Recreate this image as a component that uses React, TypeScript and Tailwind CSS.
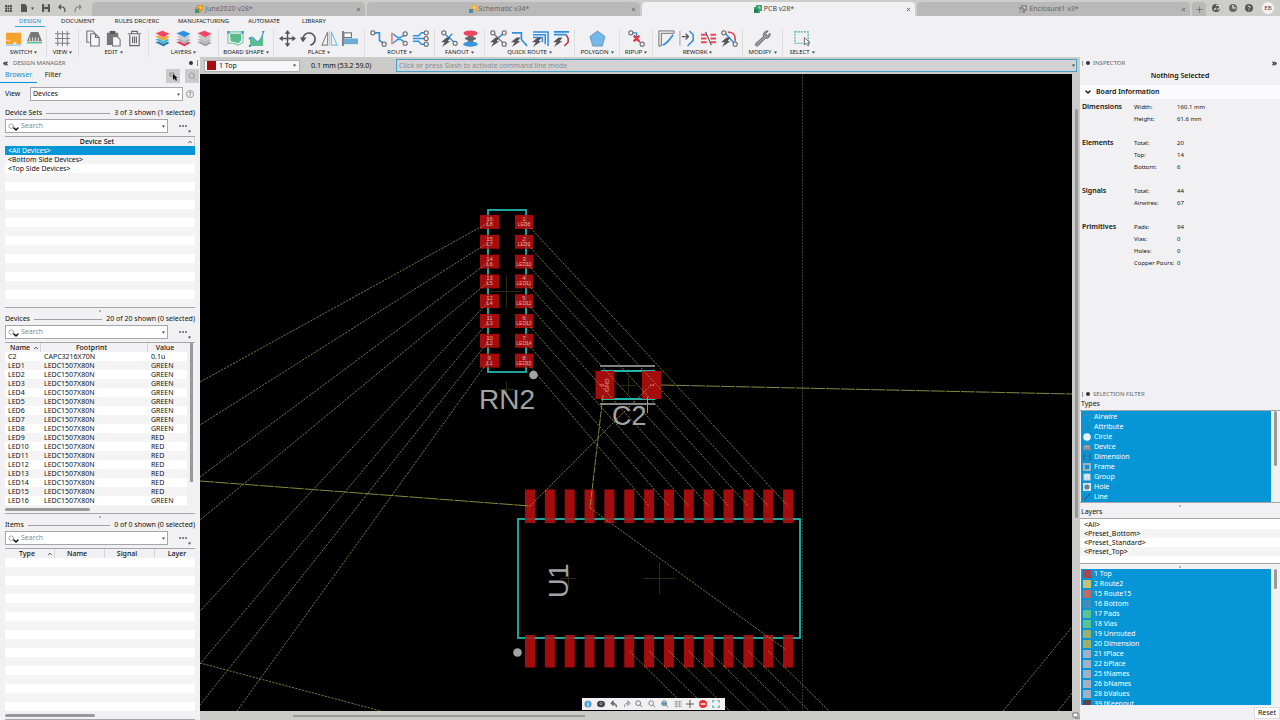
import React from 'react';
import { ChevronDown, ChevronUp, ChevronsLeft, ChevronsRight, Plus, Search } from 'lucide-react';

type IconProps = { className?: string };

const Svg: React.FC<{ children: React.ReactNode; className?: string; box?: string }> = ({
  children,
  className = 'w-[17px] h-[17px]',
  box = '0 0 18 18',
}) => (
  <svg viewBox={box} className={className} fill="none" stroke="#555" strokeWidth="1.2">
    {children}
  </svg>
);

const BoltMark = () => <path d="M6 8 L0 13 L4 13 L1 18 L10 12 L7 12 L10 8 Z" fill="#555" stroke="none" />;
const Ring: React.FC<{ x: number; y: number }> = ({ x, y }) => (
  <circle cx={x} cy={y} r="2.2" fill="#f1f1f3" stroke="#666" strokeWidth="1.1" />
);

const Stack: React.FC<{ a: string; b: string; c: string; d: string }> = ({ a, b, c, d }) => (
  <Svg>
    <g stroke="#f1f1f3" strokeWidth="0.5">
      <path d="M1 13 L9 10 L17 13.5 L10 17.5 Z" fill={d} />
      <path d="M1 10 L9 7 L17 10.5 L10 14.5 Z" fill={c} />
      <path d="M1 7 L9 4 L17 7.5 L10 11.5 Z" fill={b} />
      <path d="M1 3.5 L9 0.5 L17 4 L10 8 Z" fill={a} />
    </g>
  </Svg>
);

const icons: Record<string, React.ReactNode> = {
  board: (
    <Svg>
      <path d="M1 3 H17 V15 H12 V13 H9 V15 H1 Z" fill="#f5a12c" stroke="none" />
      <path d="M1 11 H5 V13" stroke="#ffe0b0" strokeWidth="0.9" />
      <path d="M1 16 H17" stroke="#6cc3ea" strokeWidth="1" />
    </Svg>
  ),
  chip: (
    <Svg>
      <path d="M5 2 H13 L17 12 H1 Z" fill="#777" stroke="none" />
      <path d="M4 8 V12 M7 8 V12 M10 8 V12 M13 8 V12" stroke="#ddd" />
      <path d="M1 13.5 H17" stroke="#5fc58f" strokeWidth="1.6" />
    </Svg>
  ),
  grid: (
    <Svg>
      <path d="M1 4 H17 M1 9 H17 M1 14 H17 M4 1 V17 M9 1 V17 M14 1 V17" stroke="#777" strokeWidth="1" />
    </Svg>
  ),
  copy: (
    <Svg>
      <path d="M6 13 H3 V1 H9 L12 4" stroke="#777" />
      <path d="M7 4 H12 L16 8 V17 H7 Z M12 4 V8 H16" stroke="#777" fill="#f7f7f8" />
    </Svg>
  ),
  paste: (
    <Svg>
      <path d="M2 3 H14 V8 H8 V16 H2 Z" fill="#777" stroke="none" />
      <path d="M5 1 H11 V4 H5 Z" fill="#555" stroke="none" />
      <path d="M8 7 H13 L16 10 V17 H8 Z" fill="#f7f7f8" stroke="#777" />
    </Svg>
  ),
  trash: (
    <Svg>
      <path d="M2 4 H16 M6 4 V1.500 H12 V4 M4 5 V16.500 H14 V5 M7 7 V14 M9 7 V14 M11 7 V14" stroke="#666" />
    </Svg>
  ),
  layersAll: <Stack a="#ee4560" b="#f7a32b" c="#35b8dc" d="#2670ad" />,
  layersBlue: <Stack a="#2f8fe0" b="#c9c9cb" c="#aaaaac" d="#dd3350" />,
  layersRed: <Stack a="#ee4560" b="#c4c4c6" c="#b4b4b6" d="#9c9c9e" />,
  shape: (
    <Svg>
      <path d="M3 4 H15 V11 L12 14 L4 12 Z" fill="#59bd8e" stroke="none" />
      <path d="M1 2 H17 V13 L12 16 L6 14 H1 Z" stroke="#79c7a5" />
      <path d="M0 1 h3 v3 h-3 z M15 1 h3 v3 h-3 z" fill="#4aa4dd" stroke="none" />
    </Svg>
  ),
  outline: (
    <Svg>
      <path d="M2 17 V9 Q5 6 8 11 Q12 15 16 3 V17 Z" fill="#59bd8e" stroke="none" />
      <path d="M1 9 Q5 5 8 11 Q12 16 17 1" stroke="#3c8fcc" strokeWidth="1" />
      <path d="M1 8 h2 v2 h-2 z M15 1 h2 v2 h-2 z M1 16 h2 v2 h-2 z" fill="#3c8fcc" stroke="none" />
    </Svg>
  ),
  move: (
    <Svg>
      <path d="M9 3 V15 M3 9 H15" strokeWidth="1.5" />
      <path d="M9 0 L12 4 H6 Z M9 18 L12 14 H6 Z M0 9 L4 6 V12 Z M18 9 L14 6 V12 Z" fill="#555" stroke="none" />
    </Svg>
  ),
  rotate: (
    <Svg>
      <path d="M3 10 A6.500 6.500 0 1 1 11 16" strokeWidth="1.7" />
      <path d="M0 8 H7 L3 13 Z" fill="#555" stroke="none" />
    </Svg>
  ),
  mirror: (
    <Svg>
      <path d="M7 2 V16 H1 Z" stroke="#888" />
      <path d="M11 2 V16 H17 Z" stroke="#79bfe4" />
      <path d="M9 1 V17" stroke="#bbb" strokeWidth="0.8" />
    </Svg>
  ),
  align: (
    <Svg>
      <path d="M1 1 V17" strokeWidth="1.5" />
      <rect x="2" y="3" width="8" height="5" fill="#fafafa" stroke="#777" />
      <rect x="2" y="9" width="15" height="6" fill="#6cabd8" stroke="none" />
    </Svg>
  ),
  route: (
    <Svg>
      <path d="M4 3 H10 V11 L14 14" stroke="#2f8fe0" strokeWidth="1.7" />
      <Ring x={3} y={3} />
      <Ring x={15} y={15} />
    </Svg>
  ),
  routeDiff: (
    <Svg>
      <path d="M2 4 L7 8 H10 L15 5 M2 14 L7 10 H10 L15 13" stroke="#2f8fe0" strokeWidth="1.6" />
      <path d="M1 3 V15" stroke="#e0455a" />
      <Ring x={15} y={4} />
      <Ring x={15} y={14} />
    </Svg>
  ),
  routeMulti: (
    <Svg>
      <path d="M1 6 H7 L10 3 H14 M1 9 H14 M1 12 H7 L10 15 H14" stroke="#2f8fe0" strokeWidth="1.6" />
      <Ring x={15} y={3} />
      <Ring x={15} y={9} />
      <Ring x={15} y={15} />
    </Svg>
  ),
  fanout: (
    <Svg>
      <path d="M5 5 L14 13 M6 10 L12 4" stroke="#2f8fe0" strokeWidth="1.5" />
      <BoltMark />
      <Ring x={3} y={3} />
      <Ring x={15} y={14} />
    </Svg>
  ),
  via: (
    <Svg>
      <path d="M6 3 H12 V15 H6 Z" fill="#777" stroke="none" />
      <ellipse cx="9" cy="3.500" rx="7.500" ry="3" fill="#ee4560" stroke="none" />
      <ellipse cx="9" cy="9" rx="6" ry="2" fill="#666" stroke="none" />
      <ellipse cx="9" cy="15" rx="7.500" ry="2.800" fill="#3a96dc" stroke="none" />
    </Svg>
  ),
  quickAll: (
    <Svg>
      <path d="M3 3 L9 9 M9 9 L15 15" stroke="#666" />
      <path d="M8 9 L15 3" stroke="#2f8fe0" strokeWidth="1.6" />
      <BoltMark />
      <Ring x={3} y={3} />
      <Ring x={15} y={3} />
      <Ring x={15} y={15} />
    </Svg>
  ),
  quickOne: (
    <Svg>
      <path d="M1 3 H11 V10 L17 17" stroke="#2f8fe0" strokeWidth="1.8" />
      <BoltMark />
    </Svg>
  ),
  quickMany: (
    <Svg>
      <path d="M1 2 H17 V17 M1 5 H14 V15 M1 8 H11 V13" stroke="#2f8fe0" strokeWidth="1.6" />
      <BoltMark />
    </Svg>
  ),
  quickRed: (
    <Svg>
      <path d="M1 2 H17 M1 5 H14" stroke="#2f8fe0" strokeWidth="1.8" />
      <path d="M14 5 L16 9 V13 L12 17" stroke="#b2313c" strokeWidth="1.6" />
      <BoltMark />
    </Svg>
  ),
  polygon: (
    <Svg>
      <path d="M9 1 L17 7 L14 17 H4 L1 7 Z" fill="#74b9ea" stroke="#5a87a8" strokeWidth="0.8" />
    </Svg>
  ),
  ripup: (
    <Svg>
      <path d="M4 3 H9 V10 L14 14" stroke="#2f8fe0" strokeWidth="1.4" />
      <path d="M6 6 L12 12 M12 6 L6 12" stroke="#e23a45" strokeWidth="2.4" />
      <Ring x={3} y={3} />
      <Ring x={15} y={15} />
    </Svg>
  ),
  miter: (
    <Svg>
      <path d="M1 17 V1 H17 V3.500 H3.500 V17 Z" fill="#f7f7f8" stroke="#666" strokeWidth="1" />
      <path d="M5 16 Q9 15 16 5" stroke="#2f8fe0" strokeWidth="1.800" />
    </Svg>
  ),
  slide: (
    <Svg>
      <path d="M1 1 V17" stroke="#aaa" />
      <path d="M3 7 H10 M7 4 L10 7 L7 10" strokeWidth="1.400" />
      <path d="M11 1 L15 5 V11 L9 17" stroke="#2f8fe0" strokeWidth="1.600" />
    </Svg>
  ),
  split: (
    <Svg>
      <path d="M1 5 H7 M11 5 H17 M1 9 H7 M11 9 H17 M1 13 H7 M11 13 H17" stroke="#ee4560" strokeWidth="2" />
      <path d="M6 2 L12 16" stroke="#555" />
    </Svg>
  ),
  reroute: (
    <Svg>
      <path d="M4 3 L14 14" stroke="#2f8fe0" strokeWidth="1.600" />
      <path d="M7 2 Q16 2 15 12" stroke="#e0455a" strokeWidth="1.600" />
      <BoltMark />
      <Ring x={3} y={3} />
      <Ring x={15} y={15} />
    </Svg>
  ),
  wrench: (
    <Svg>
      <path
        d="M10 7 A4.500 4.500 0 0 1 15 1 L12.500 4 L14.500 6 L17 3.500 A4.500 4.500 0 0 1 12 9 L4 17 Q0 17 2 14 Z"
        fill="#999"
        stroke="#666"
        strokeWidth="0.9"
      />
    </Svg>
  ),
  select: (
    <Svg>
      <rect x="1" y="2" width="14" height="12" stroke="#3fae84" strokeDasharray="2 1.2" />
      <path d="M11 8 V16 L13 14 L15 17 L16 16 L14.5 13.5 H17 Z" fill="#fff" stroke="#444" strokeWidth="0.8" />
    </Svg>
  ),
};

const toolGroups = [
  { label: 'SWITCH', width: 'w-[46px]', icons: ['board', 'chip'] },
  { label: 'VIEW', width: 'w-8', icons: ['grid'] },
  { label: 'EDIT', width: 'w-[70px]', icons: ['copy', 'paste', 'trash'] },
  { label: 'LAYERS', width: 'w-[70px]', icons: ['layersAll', 'layersBlue', 'layersRed'] },
  { label: 'BOARD SHAPE', width: 'w-[55px]', icons: ['shape', 'outline'] },
  { label: 'PLACE', width: 'w-[91px]', icons: ['move', 'rotate', 'mirror', 'align'] },
  { label: 'ROUTE', width: 'w-[70px]', icons: ['route', 'routeDiff', 'routeMulti'] },
  { label: 'FANOUT', width: 'w-[50px]', icons: ['fanout', 'via'] },
  { label: 'QUICK ROUTE', width: 'w-[90px]', icons: ['quickAll', 'quickOne', 'quickMany', 'quickRed'] },
  { label: 'POLYGON', width: 'w-[45px]', icons: ['polygon'] },
  { label: 'RIPUP', width: 'w-[33px]', icons: ['ripup'] },
  { label: 'REWORK', width: 'w-[90px]', icons: ['miter', 'slide', 'split', 'reroute'] },
  { label: 'MODIFY', width: 'w-10', icons: ['wrench'] },
  { label: 'SELECT', width: 'w-[38px]', icons: ['select'] },
];

const menuTabs = [
  { label: 'DESIGN', width: 'w-[30px]', active: true },
  { label: 'DOCUMENT', width: 'w-[42px]' },
  { label: 'RULES DRC/ERC', width: 'w-[52px]' },
  { label: 'MANUFACTURING', width: 'w-[57px]' },
  { label: 'AUTOMATE', width: 'w-10' },
  { label: 'LIBRARY', width: 'w-9' },
];

const docTabs = [
  { label: 'June2020 v28*', color: '#e0962e', accent: '#3e9a72' },
  { label: 'Schematic v34*', color: '#e8b04a', accent: '#3c8fb8' },
  { label: 'PCB v28*', color: '#3aa372', accent: '#2b7d57', active: true },
  { label: 'Enclosure1 v3*', color: '#8a8a8a', accent: '#a8a8a8' },
];

const CloseMark = () => (
  <Svg box="0 0 6 6" className="w-[5px] h-[5px]">
    <path d="M1 1 L5 5 M5 1 L1 5" stroke="#555" strokeWidth="1" />
  </Svg>
);

const Caret: React.FC<IconProps> = ({ className = '' }) => (
  <svg viewBox="0 0 4 3" className={`w-[3px] h-[3px] ${className}`}>
    <path d="M0 0 H4 L2 3 Z" fill="#444" />
  </svg>
);

const TitleBar = () => (
  <header className="flex h-4 shrink-0 items-end bg-[#cdcdcb] text-[7px] text-[#666]">
    <div className="flex h-4 w-[92px] items-center gap-2 pl-1">
      <button aria-label="Data panel">
        <Svg box="0 0 8 8" className="w-2 h-2">
          <path d="M1 1h2v2H1zM3.500 1h2v2h-2zM6 1h2v2H6zM1 3.500h2v2H1zM3.500 3.500h2v2h-2zM6 3.500h2v2H6zM1 6h2v2H1zM3.500 6h2v2h-2zM6 6h2v2H6z" fill="#555" stroke="none" />
        </Svg>
      </button>
      <button aria-label="File" className="flex items-center gap-[3px]">
        <Svg box="0 0 8 8" className="w-2 h-2">
          <path d="M1 0 H5 L7 2 V8 H1 Z" fill="#555" stroke="none" />
        </Svg>
        <Caret />
      </button>
      <button aria-label="Save">
        <Svg box="0 0 8 8" className="w-2 h-2">
          <path d="M0 0 H7 L8 1 V8 H0 Z" fill="#555" stroke="none" />
          <path d="M2 0 H6 V3 H2 Z M2 5 H6 V8 H2 Z" fill="#bbb" stroke="none" />
        </Svg>
      </button>
      <button aria-label="Undo">
        <Svg box="0 0 8 8" className="w-2 h-2">
          <path d="M2 3 H5 Q7 4 7 8" stroke="#555" />
          <path d="M0 3 L3 0 V6 Z" fill="#555" stroke="none" />
        </Svg>
      </button>
      <button aria-label="Redo">
        <Svg box="0 0 8 8" className="w-2 h-2">
          <path d="M6 3 H3 Q1 4 1 8" stroke="#888" />
          <path d="M8 3 L5 0 V6 Z" fill="#888" stroke="none" />
        </Svg>
      </button>
    </div>
    <nav className="flex h-[14px] min-w-0 flex-1 gap-[2px]">
      {docTabs.map((tab) => (
        <div
          key={tab.label}
          className={`flex min-w-0 flex-1 items-center rounded-t-sm pr-1 ${
            tab.active ? 'bg-[#f1f1f3] text-[#444]' : 'bg-[#b9b9ba]'
          }`}
        >
          <button className="flex flex-1 items-center justify-center gap-[2px]">
            <Svg box="0 0 8 8" className="w-2 h-2">
              <path d="M2 0 H8 V6 H6 V8 H0 V2 H2 Z" fill={tab.color} stroke="none" />
              <path d="M0 4 H4 V8 H0 Z" fill={tab.accent} stroke="none" />
              <path d="M4 2 H6 V4" stroke="#eee" strokeWidth="0.8" />
            </Svg>
            {tab.label}
          </button>
          <button aria-label={`Close ${tab.label}`}>
            <CloseMark />
          </button>
        </div>
      ))}
      <button aria-label="New tab" className="flex w-[14px] items-center justify-center rounded-t-sm bg-[#b9b9ba]">
        <Plus size={9} />
      </button>
    </nav>
    <div className="flex h-4 w-[74px] items-center justify-between pl-[6px] pr-[6px]">
      <button aria-label="Extensions">
        <Svg box="0 0 8 8" className="w-2 h-2">
          <circle cx="4" cy="4" r="4" fill="#555" stroke="none" />
          <path d="M2 6 L4 4 M4 2 A2 2 0 1 1 5 5" stroke="#ddd" />
        </Svg>
      </button>
      <button aria-label="Job status">
        <Svg box="0 0 8 8" className="w-2 h-2">
          <circle cx="4" cy="4" r="4" fill="#666" stroke="none" />
          <path d="M4 1 V4 H7" stroke="#eee" />
        </Svg>
      </button>
      <button aria-label="Help">
        <Svg box="0 0 8 8" className="w-2 h-2">
          <circle cx="4" cy="4" r="4" fill="#555" stroke="none" />
          <path d="M3 3 Q3 2 4 2 Q5.500 2 5 3.500 L4 4.500 M4 5.500 V6.500" stroke="#eee" strokeWidth="0.9" />
        </Svg>
      </button>
      <button className="flex h-3 w-3 items-center justify-center rounded-full bg-[#f3f3f3] text-[6px] text-[#444]">
        EB
      </button>
    </div>
  </header>
);

const Toolbar = () => (
  <div className="h-[41px] shrink-0 overflow-hidden bg-[#f1f1f3] text-[#222]">
    <nav className="flex h-[11px] gap-3 pl-[15px]">
      {menuTabs.map((tab) => (
        <button
          key={tab.label}
          className={`flex h-[11px] shrink-0 items-center justify-center whitespace-nowrap border-b text-[6px] ${tab.width} ${
            tab.active ? 'border-[#3fa3cf] text-[#1593cf]' : 'border-transparent'
          }`}
        >
          {tab.label}
        </button>
      ))}
    </nav>
    <div className="flex pl-px pt-[2px]">
      {toolGroups.map((group, i) => (
        <div
          key={group.label}
          className={`flex h-7 shrink-0 flex-col items-center border-[#dedee0] ${
            i < toolGroups.length - 1 ? 'border-r' : ''
          } ${group.width}`}
        >
          <div className="flex h-[18px]">
            {group.icons.map((name) => (
              <button key={name} aria-label={name} className="flex w-[21px] items-center justify-center">
                {icons[name]}
              </button>
            ))}
          </div>
          <button className="flex h-[10px] items-center gap-[2px] whitespace-nowrap text-[6px]">
            {group.label}
            <Caret />
          </button>
        </div>
      ))}
    </div>
  </div>
);

const SectionTitle: React.FC<{ title: string; note: string }> = ({ title, note }) => (
  <div className="flex h-3 shrink-0 items-center gap-1">
    <h2>{title}</h2>
    <span className="h-px flex-1 bg-[#a0a0a2]" />
    <span>{note}</span>
  </div>
);

const SearchRow: React.FC<{ id: string }> = ({ id }) => (
  <div className="flex h-[14px] shrink-0 items-center gap-[10px]">
    <label
      htmlFor={id}
      className="flex h-[14px] w-[163px] items-center border border-[#a6a6a8] bg-white pl-[2px] pr-[2px]"
    >
      <Search size={7} className="text-[#777]" />
      <ChevronDown size={8} strokeWidth={4} className="-ml-[3px] mt-[6px] shrink-0 text-black" />
      <input
        id={id}
        placeholder="Search"
        className="min-w-0 flex-1 bg-transparent pl-[1px] text-[7px] outline-none placeholder:text-[#8a8a8a]"
      />
      <Caret />
    </label>
    <button aria-label="More options" className="flex h-[14px] w-[13px] flex-col items-end justify-end">
      <Svg box="0 0 8 2" className="w-2 h-[2px] mr-1">
        <path d="M0 0h2v2H0zM3 0h2v2H3zM6 0h2v2H6z" fill="#888" stroke="none" />
      </Svg>
      <Caret className="mt-[3px]" />
    </button>
  </div>
);

const Handle = () => (
  <div className="flex h-[5px] shrink-0 items-center justify-center">
    <span className="h-[2px] w-[2px] bg-[#b5b5b7]" />
  </div>
);

interface Column {
  label: string;
  width: string;
  sorted?: boolean;
}

interface GridTableProps {
  columns: Column[];
  rows: string[][];
  selected?: number;
}

// Pads the data with blank striped rows so the grid always fills its panel
const GridTable: React.FC<GridTableProps> = ({ columns, rows, selected }) => {
  const blanks = Math.max(0, 18 - rows.length);
  const allRows = [...rows, ...Array.from({ length: blanks }, () => columns.map(() => ''))];
  return (
    <table className="w-full table-fixed border-collapse leading-[9px]">
      <thead>
        <tr className="h-[9px] bg-[#f1f1f3] leading-[8px]">
          {columns.map((col) => (
            <th
              key={col.label}
              className={`relative h-[9px] py-0 pl-0 pr-[6px] font-medium shadow-[inset_-1px_0_0_#d4d4d6] ${col.width}`}
            >
              {col.label}
              {col.sorted && <ChevronUp size={6} strokeWidth={3} className="absolute right-[2px] top-[2px]" />}
            </th>
          ))}
        </tr>
      </thead>
      <tbody>
        {allRows.map((row, i) => (
          <tr
            key={i}
            className={`h-[9px] ${i === selected ? 'bg-[#0696d7] text-white' : i % 2 ? 'bg-[#f4f4f4]' : 'bg-white'}`}
          >
            {row.map((cell, j) => (
              <td key={j} className="h-[9px] whitespace-nowrap py-0 pl-[3px] pr-0">
                {cell}
              </td>
            ))}
          </tr>
        ))}
      </tbody>
    </table>
  );
};

const devices = [
  ['C2', 'CAPC3216X70N', '0.1u'],
  ...Array.from({ length: 16 }, (_, i) => [`LED${i + 1}`, 'LEDC1507X80N', i < 8 || i === 15 ? 'GREEN' : 'RED']),
];

const DesignManager = () => (
  <aside className="flex w-[200px] shrink-0 flex-col overflow-hidden bg-[#f1f1f3]">
    <div className="flex h-3 shrink-0 items-center gap-1 pl-[2px] pr-[2px] text-[6px] text-[#666]">
      <ChevronsLeft size={7} strokeWidth={4} className="text-[#333]" />
      <span className="flex-1">DESIGN MANAGER</span>
      <span className="h-1 w-1 rounded-full bg-[#333]" />
      <span className="h-[6px] w-px bg-[#888]" />
    </div>
    <div className="flex h-[14px] shrink-0 items-center">
      <button className="h-[14px] w-[37px] border-b border-[#0696d7] pb-[2px] text-[#0a8fd0]">Browser</button>
      <button className="h-[14px] w-8 pb-[2px]">Filter</button>
      <div className="flex flex-1 justify-end gap-[5px] pr-px">
        <button aria-label="Pick in canvas" className="flex h-[14px] w-[14px] items-center justify-center bg-[#cbcbcc]">
          <Svg box="0 0 9 9" className="w-[9px] h-[9px]">
            <path d="M1 1 H5 V4 H1 Z" stroke="#777" strokeWidth="0.8" />
            <path d="M4 2 V8 L5.500 6.500 L7 9 L8 8 L7 6 H8.500 Z" fill="#111" stroke="none" />
          </Svg>
        </button>
        <button aria-label="Zoom to selection" className="flex h-[14px] w-[14px] items-center justify-center bg-[#cbcbcc]">
          <Search size={8} className="text-[#888]" />
        </button>
      </div>
    </div>
    <div className="flex h-6 shrink-0 items-center pb-[2px] pl-[5px] pr-[6px]">
      <label htmlFor="view" className="w-[25px]">
        View
      </label>
      <div className="flex h-[14px] flex-1 items-center border border-[#a6a6a8] bg-white pr-[2px]">
        <select id="view" className="min-w-0 flex-1 appearance-none bg-transparent pl-[2px] outline-none">
          <option>Devices</option>
        </select>
        <Caret />
      </div>
      <button aria-label="Help" className="ml-[3px] flex h-2 w-2 items-center justify-center rounded-full border border-[#999] text-[5px]">
        ?
      </button>
    </div>

    <div className="flex min-h-0 flex-1 flex-col pl-[5px] pr-[5px]">
      <section className="flex min-h-0 flex-1 flex-col">
        <SectionTitle title="Device Sets" note="3 of 3 shown (1 selected)" />
        <SearchRow id="search-sets" />
        <div className="mt-[3px] min-h-0 flex-1 overflow-hidden border-y border-[#a6a6a8] bg-white">
          <GridTable
            columns={[{ label: 'Device Set', width: 'w-full', sorted: true }]}
            rows={[['<All Devices>'], ['<Bottom Side Devices>'], ['<Top Side Devices>']]}
            selected={0}
          />
        </div>
      </section>
      <Handle />
      <section className="flex min-h-0 flex-1 flex-col">
        <SectionTitle title="Devices" note="20 of 20 shown (0 selected)" />
        <SearchRow id="search-devices" />
        <div className="mt-[3px] flex min-h-0 flex-1 flex-col overflow-hidden border-y border-[#a6a6a8]">
          <div className="flex min-h-0 flex-1">
            <div className="min-h-0 flex-1 overflow-hidden bg-white">
              <GridTable
                columns={[
                  { label: 'Name', width: 'w-9', sorted: true },
                  { label: 'Footprint', width: 'w-[107px]' },
                  { label: 'Value', width: 'w-10' },
                ]}
                rows={devices}
              />
            </div>
            <div className="flex w-2 justify-center">
              <span className="h-[86%] w-[3px] bg-[#999]" />
            </div>
          </div>
          <div className="flex h-2 shrink-0 items-center">
            <span className="h-[3px] w-[85px] rounded-full bg-[#999]" />
          </div>
        </div>
      </section>
      <Handle />
      <section className="flex min-h-0 flex-1 flex-col">
        <SectionTitle title="Items" note="0 of 0 shown (0 selected)" />
        <SearchRow id="search-items" />
        <div className="mt-[3px] flex min-h-0 flex-1 flex-col overflow-hidden border-y border-[#a6a6a8]">
          <div className="min-h-0 flex-1 overflow-hidden bg-white">
            <GridTable
              columns={[
                { label: 'Type', width: 'w-[50px]', sorted: true },
                { label: 'Name', width: 'w-[50px]' },
                { label: 'Signal', width: 'w-[50px]' },
                { label: 'Layer', width: 'w-[50px]' },
              ]}
              rows={[]}
            />
          </div>
          <div className="flex h-2 shrink-0 items-center">
            <span className="h-[3px] w-[90px] rounded-full bg-[#999]" />
          </div>
        </div>
      </section>
    </div>
  </aside>
);

const Cross: React.FC<{ x: number; y: number; r: number }> = ({ x, y, r }) => (
  <path d={`M${x - r} ${y} H${x + r} M${x} ${y - r} V${y + r}`} stroke="#2b2b12" strokeWidth="1" />
);

const resistorRows = Array.from({ length: 8 }, (_, i) => 215 + i * 19.8);
const icPins = Array.from({ length: 14 }, (_, i) => 525 + i * 19.85);
const leftEnds = [
  [200, 382],
  [200, 425],
  [200, 477],
  [200, 520],
  [200, 611],
  [200, 664],
  [200, 705],
  [237, 711],
];

const BoardCanvas = () => (
  <svg viewBox="200 74 872 637" preserveAspectRatio="xMinYMin slice" className="h-full w-full bg-black" fontFamily="Liberation Sans, sans-serif">
    <path d="M802.500 74 V711" stroke="#35352c" strokeDasharray="2 1" />

    <g fill="none" stroke="#22b5ab" strokeWidth="1.8">
      <rect x="488" y="210" width="38" height="162" />
      <path d="M601 371 H655 M601 399 H655" />
      <rect x="518" y="519" width="282" height="119" />
    </g>
    <path d="M600 366 H655 M600 404 H655" stroke="#b0b0b0" strokeWidth="1.6" />

    <g fill="#a50c0e">
      {resistorRows.map((y) => (
        <React.Fragment key={y}>
          <rect x="480" y={y} width="19" height="14" />
          <rect x="515" y={y} width="18" height="14" />
        </React.Fragment>
      ))}
      <rect x="595.500" y="371" width="19" height="28" />
      <rect x="642" y="371" width="19" height="28" />
      {icPins.map((x) => (
        <React.Fragment key={x}>
          <rect x={x} y="489.500" width="10" height="33.500" />
          <rect x={x} y="635" width="10" height="32.500" />
        </React.Fragment>
      ))}
    </g>
    <g stroke="#22b5ab" strokeWidth="1.800" opacity="0.2">
      <path d="M488 215 V368 M526 215 V368 M525 519 H793 M525 638 H793" />
    </g>

    <g stroke="#96964a" strokeWidth="0.9" strokeDasharray="2.2 1.2" opacity="0.9">
      {leftEnds.map(([x, y], i) => (
        <path key={i} d={`M488 ${223 + i * 19.8} L${x} ${y}`} />
      ))}
      {resistorRows.map((y, i) => (
        <path key={y} d={`M526 ${y + 8} L${788 - i * 19.85} 506`} />
      ))}
      {icPins.slice(5, 13).map((x) => (
        <path key={x} d={`M${x + 5} 651 L${x + 66} 711`} />
      ))}
      <path d="M530 506 L651 385 M590 508 L785 649 M200 663 L381 711" />
      <path d="M1003 711 L1072 627 M1058 711 L1072 693" />
    </g>
    <g stroke="#96964a" strokeWidth="0.9">
      <path d="M200 481 L530 506 M661 385 L1072 394" strokeDasharray="14 1" />
      <path d="M603 395 L590 508" strokeDasharray="7 1" />
    </g>

    <Cross x={506.5} y={291.5} r={16} />
    <Cross x={506.5} y={389.5} r={8} />
    <Cross x={628.5} y={385.5} r={8} />
    <Cross x={659.5} y={578.5} r={16} />
    <Cross x={568.5} y={578.5} r={8} />
    <path d="M647.500 397 V413" stroke="#999" />

    <g fill="#eda39e" fontSize="6" textAnchor="middle">
      {resistorRows.map((y, i) => (
        <React.Fragment key={y}>
          <text x="489.500" y={y + 6}>{16 - i}</text>
          <text x="489.500" y={y + 11}>{`L${8 - i}`}</text>
          <text x="524" y={y + 6}>{i + 1}</text>
          <text x="524" y={y + 11} fontSize="5">{`LED${i + 8}`}</text>
        </React.Fragment>
      ))}
      <text transform="translate(604 385) rotate(-90)">2</text>
      <text transform="translate(609 385) rotate(-90)">GND</text>
      <text transform="translate(654 385) rotate(-90)">1</text>
    </g>

    <g fill="#a3a3a3">
      <circle cx="533.500" cy="375" r="4.300" />
      <circle cx="517.500" cy="652.500" r="4.300" />
      <text x="479" y="409" fontSize="28">RN2</text>
      <text x="612" y="425" fontSize="27">C2</text>
      <text transform="translate(568 598) rotate(-90)" fontSize="27">U1</text>
    </g>
  </svg>
);

const viewTools: { name: string; art: React.ReactNode }[] = [
  {
    name: 'Info',
    art: (
      <>
        <circle cx="5" cy="5" r="4.500" fill="#5a9fd0" stroke="none" />
        <path d="M5 2 V3 M5 4 V8" stroke="#fff" />
      </>
    ),
  },
  {
    name: 'Visibility',
    art: (
      <>
        <ellipse cx="5" cy="5" rx="5" ry="4" fill="#444" stroke="none" />
        <circle cx="5" cy="4.500" r="1.500" stroke="#ccc" strokeWidth="0.700" />
      </>
    ),
  },
  { name: 'Undo', art: <path d="M8 9 Q9 4 3 4 M4 1 L1 4 L4 7 Z" fill="#555" fillOpacity="0.5" /> },
  { name: 'Redo', art: <path d="M2 9 Q1 4 7 4 M6 1 L9 4 L6 7 Z" stroke="#888" /> },
  { name: 'Zoom out', art: <path d="M1 4 A3 3 0 1 1 7 4 A3 3 0 1 1 1 4 M6 6 L9 9" stroke="#777" /> },
  { name: 'Zoom in', art: <path d="M1 4 A3 3 0 1 1 7 4 A3 3 0 1 1 1 4 M6 6 L9 9" stroke="#888" /> },
  {
    name: 'Zoom fit',
    art: (
      <>
        <path d="M1 4 A3 3 0 1 1 7 4 A3 3 0 1 1 1 4 M6 6 L9 9" stroke="#777" />
        <path d="M1 3 H7 V6 H1 Z" fill="#4a90b8" stroke="none" />
      </>
    ),
  },
  { name: 'Grid', art: <path d="M0 2 H10 M0 5 H10 M0 8 H10 M3 1 V9 M7 1 V9" stroke="#888" strokeWidth="0.800" /> },
  { name: 'Origin', art: <path d="M0 5 H10 M5 0 V10" /> },
  {
    name: 'Stop',
    art: (
      <>
        <circle cx="5" cy="5" r="5" fill="#ee2b32" stroke="none" />
        <path d="M2 5 H8" stroke="#fff" strokeWidth="1.800" />
      </>
    ),
  },
  { name: 'Select', art: <path d="M1 3 V1 H3 M7 1 H9 V3 M1 7 V9 H3 M7 9 H9 V7" stroke="#3aa880" strokeWidth="1.300" /> },
];

const Workspace = () => (
  <main className="flex min-w-0 flex-1 flex-col bg-[#cbcbc9]">
    <div className="flex h-[17px] shrink-0 items-center pl-[4px] pr-[3px]">
      <div className="flex h-3 w-24 items-center border border-[#b0b0b0] bg-[#f6f6f8] pl-[2px] pr-[3px]">
        <span className="h-[9px] w-[9px] bg-[#a50c0e]" />
        <select aria-label="Layer" className="min-w-0 flex-1 appearance-none bg-transparent pl-[3px] outline-none">
          <option>1 Top</option>
        </select>
        <Caret />
      </div>
      <span className="w-24 whitespace-nowrap pl-[11px]">0.1 mm (53.2 59.0)</span>
      <div className="flex h-[13px] flex-1 items-center border border-[#4a9fc4] bg-[#d2d2d4] pr-[1px]">
        <input
          aria-label="Command line"
          placeholder="Click or press Slash to activate command line mode"
          className="min-w-0 flex-1 bg-transparent pl-[2px] outline-none placeholder:text-[#8c8c8c]"
        />
        <Caret />
      </div>
    </div>
    <div className="flex min-h-0 flex-1">
      <div className="relative min-w-0 flex-1 overflow-hidden">
        <BoardCanvas />
        <div className="absolute bottom-[1px] left-[382px] flex h-3 w-[143px] items-center bg-[#f1f1f3] pr-[3px]">
          {viewTools.map((tool) => (
            <button key={tool.name} aria-label={tool.name} className="flex flex-1 justify-center">
              <Svg box="0 0 10 10" className="w-2 h-2">
                {tool.art}
              </Svg>
            </button>
          ))}
        </div>
      </div>
      <div className="flex w-2 shrink-0 justify-center pt-[35px]">
        <span className="h-[68%] w-[3px] rounded-full bg-[#999]" />
      </div>
    </div>
    <div className="flex h-[9px] shrink-0 items-center justify-between pl-[93px]">
      <span className="h-[2px] w-[292px] bg-[#999]" />
      <Svg box="0 0 8 8" className="w-2 h-2">
        <path d="M1 1 H6 V5 H1 Z M3 6 H8 V3" fill="#fff" strokeWidth="0.800" />
      </Svg>
    </div>
  </main>
);

const boardInfo = [
  { title: 'Dimensions', rows: [['Width:', '160.1 mm'], ['Height:', '61.6 mm']] },
  { title: 'Elements', rows: [['Total:', '20'], ['Top:', '14'], ['Bottom:', '6']] },
  { title: 'Signals', rows: [['Total:', '44'], ['Airwires:', '67']] },
  { title: 'Primitives', rows: [['Pads:', '94'], ['Vias:', '0'], ['Holes:', '0'], ['Copper Pours:', '0']] },
];

const types: { label: string; art: React.ReactNode }[] = [
  { label: 'Airwire', art: <path d="M0 2 H7 V8" stroke="#5f8aa5" strokeDasharray="2 1" /> },
  { label: 'Attribute', art: <path d="M1 3 L4 1 L7 4 L4 7 Z" stroke="#3b7ba5" strokeWidth="0.800" /> },
  { label: 'Circle', art: <circle cx="4" cy="4" r="3.800" fill="#e8f0f8" stroke="none" /> },
  { label: 'Device', art: <path d="M0 7 L1 2 H7 L8 7 Z M2 4 V7 M4 4 V7 M6 4 V7" fill="#a5aeb5" stroke="#6d7780" strokeWidth="0.800" /> },
  { label: 'Dimension', art: <path d="M1 0 V8 M7 0 V8 M2 3 H3 M5 3 H6" stroke="#3d6080" /> },
  { label: 'Frame', art: <path d="M1 1 H7 V7 H1 Z" stroke="#a3b0ba" strokeWidth="2" /> },
  { label: 'Group', art: <path d="M1 1 H7 V7 H1 Z M4 3 V6" fill="#e3eef6" stroke="#bcd" /> },
  { label: 'Hole', art: <><path d="M0 0 H8 V8 H0 Z" fill="#dbe6ee" stroke="none" /><circle cx="4" cy="4" r="2.600" fill="#6a7f90" stroke="none" /></> },
  { label: 'Line', art: <path d="M1 7 L7 1" stroke="#35536b" strokeDasharray="2 1" /> },
];

const layers = [
  ['1 Top', '#a94550'],
  ['2 Route2', '#c9c172'],
  ['15 Route15', '#c06b62'],
  ['16 Bottom', '#3f8dbb'],
  ['17 Pads', '#5cc38e'],
  ['18 Vias', '#5cc38e'],
  ['19 Unrouted', '#9db068'],
  ['20 Dimension', '#9db068'],
  ['21 tPlace', '#a3b0c2'],
  ['22 bPlace', '#a3b0c2'],
  ['25 tNames', '#a3b0c2'],
  ['26 bNames', '#a3b0c2'],
  ['28 bValues', '#a3b0c2'],
  ['39 tKeepout', '#5b4450'],
];

const PanelHeader: React.FC<{ title: string; expand?: boolean }> = ({ title, expand }) => (
  <div className="flex h-3 shrink-0 items-center gap-[3px] pl-[2px] pr-[2px] text-[6px] text-[#666]">
    <span className="h-[5px] w-px bg-[#999]" />
    <span className="h-1 w-1 rounded-full bg-[#333]" />
    <h2 className="flex-1">{title}</h2>
    {expand && <ChevronsRight size={7} strokeWidth={4} className="text-[#333]" />}
  </div>
);

const Inspector = () => (
  <aside className="flex w-[200px] shrink-0 flex-col overflow-hidden bg-[#f1f1f3]">
    <PanelHeader title="INSPECTOR" expand />
    <p className="h-4 shrink-0 text-center font-semibold leading-[14px]">Nothing Selected</p>
    <button className="flex h-[14px] shrink-0 items-center gap-1 bg-[#fafafc] pl-1 font-semibold">
      <ChevronDown size={8} strokeWidth={4} />
      Board Information
    </button>
    <div className="flex min-h-0 flex-1 flex-col gap-3 overflow-hidden pl-[2px] pt-[2px] text-[6px]">
      {boardInfo.map((block) => (
        <section key={block.title} className="flex">
          <h3 className="w-[52px] text-[7px] font-semibold leading-3">{block.title}</h3>
          <dl className="leading-3">
            {block.rows.map(([name, value]) => (
              <div key={name} className="flex">
                <dt className="w-[43px]">{name}</dt>
                <dd>{value}</dd>
              </div>
            ))}
          </dl>
        </section>
      ))}
    </div>

    <PanelHeader title="SELECTION FILTER" />
    <h3 className="h-[10px] shrink-0 pl-px leading-[8px]">Types</h3>
    <div className="flex h-[93px] shrink-0 border-y border-[#a6a6a8] pl-px">
      <ul className="flex-1 overflow-hidden bg-[#0696d7] pt-px text-white">
        {types.map((type) => (
          <li key={type.label} className="flex h-[10px] items-center gap-[3px] pl-[2px]">
            <Svg box="0 0 8 8" className="w-2 h-2">
              {type.art}
            </Svg>
            {type.label}
          </li>
        ))}
      </ul>
      <div className="flex w-[9px] justify-center">
        <span className="h-[55px] w-[3px] rounded-full bg-[#999]" />
      </div>
    </div>
    <Handle />
    <h3 className="h-[10px] shrink-0 pl-px leading-[8px]">Layers</h3>
    <ul className="h-[46px] shrink-0 border-y border-[#a6a6a8] bg-white pt-px leading-[9px]">
      {['<All>', '<Preset_Bottom>', '<Preset_Standard>', '<Preset_Top>'].map((preset) => (
        <li key={preset} className="h-[9px] pl-1 even:bg-[#f4f4f4]">
          {preset}
        </li>
      ))}
    </ul>
    <Handle />
    <div className="flex h-[136px] shrink-0 pl-px">
      <ul className="flex-1 overflow-hidden bg-[#0696d7] text-white">
        {layers.map(([name, color]) => (
          <li key={name} className="flex h-[10px] items-center gap-[3px] pl-[2px]">
            <svg viewBox="0 0 8 8" className="h-2 w-2">
              <rect width="8" height="8" fill={color} />
            </svg>
            {name}
          </li>
        ))}
      </ul>
      <div className="flex w-[9px] justify-center">
        <span className="h-5 w-[3px] rounded-full bg-[#999]" />
      </div>
    </div>
    <div className="flex h-[15px] shrink-0 items-center justify-end">
      <button className="h-3 w-[26px] border border-[#ddd] bg-white leading-[10px]">Reset</button>
    </div>
  </aside>
);

export default function App() {
  return (
    <div className="flex h-screen flex-col overflow-hidden bg-[#f1f1f3] font-['Noto_Sans','Open_Sans',sans-serif] text-[7px] leading-[10px] text-[#111]">
      <TitleBar />
      <Toolbar />
      <div className="flex min-h-0 flex-1">
        <DesignManager />
        <Workspace />
        <Inspector />
      </div>
    </div>
  );
}
